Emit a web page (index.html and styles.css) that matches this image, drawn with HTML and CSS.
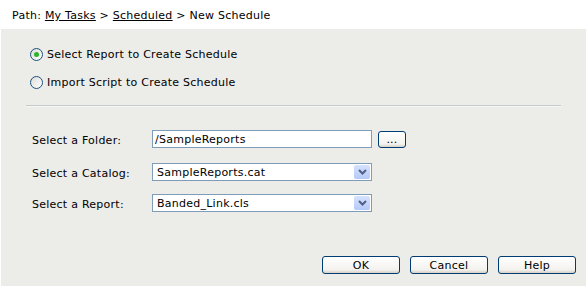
FILE: index.html
```html
<!DOCTYPE html>
<html lang="en">
  <head>
    <meta charset="UTF-8" />
    <title>New Schedule</title>
    <link rel="stylesheet" href="styles.css">
  </head>
  <body>
    <div class="path">
      Path: <a href="#" class="path-link">My Tasks</a> &gt;
      <a href="#" class="path-link">Scheduled</a> &gt; New Schedule
    </div>

    <div class="panel">
      <div class="options">
        <label class="option">
          <span class="radio radio--checked"></span>
          Select Report to Create Schedule
        </label>
        <label class="option">
          <span class="radio"></span>
          Import Script to Create Schedule
        </label>
      </div>

      <hr class="divider" />

      <div class="form">
        <span class="form-label">Select a Folder:</span>
        <div class="field">
          <div class="textbox">/SampleReports</div>
          <button class="btn btn--browse">...</button>
        </div>

        <span class="form-label">Select a Catalog:</span>
        <div class="field">
          <div class="dropdown">
            <span class="dropdown-value">SampleReports.cat</span>
            <span class="dropdown-arrow">
              <svg viewBox="0 0 9 6" class="arrow-icon">
                <path d="M1 1l3.5 3.5L8 1" fill="none" stroke="#4d6185" stroke-width="2" />
              </svg>
            </span>
          </div>
        </div>

        <span class="form-label">Select a Report:</span>
        <div class="field">
          <div class="dropdown">
            <span class="dropdown-value">Banded_Link.cls</span>
            <span class="dropdown-arrow">
              <svg viewBox="0 0 9 6" class="arrow-icon">
                <path d="M1 1l3.5 3.5L8 1" fill="none" stroke="#4d6185" stroke-width="2" />
              </svg>
            </span>
          </div>
        </div>
      </div>

      <div class="actions">
        <button class="btn btn--action">OK</button>
        <button class="btn btn--action">Cancel</button>
        <button class="btn btn--action">Help</button>
      </div>
    </div>
  </body>
</html>
```

FILE: styles.css
```css
/* XP-style schedule dialog */
* {
  margin: 0;
  padding: 0;
  box-sizing: border-box;
}

body {
  font-family: "DejaVu Sans", Verdana, sans-serif;
  font-size: 11px;
  letter-spacing: 0.25px;
  color: #000;
  background-color: #fff;
  line-height: 1;
}

/* PATH */
.path {
  height: 29px;
  padding: 10px 0 0 12px;
}
.path-link {
  color: #000;
  text-decoration: underline;
}

/* PANEL */
.panel {
  background-color: #ecece9;
  margin-left: 1px;
  height: 257px;
  padding: 19px 10px 12px 0;

  display: flex;
  flex-direction: column;
}

.options {
  display: flex;
  flex-direction: column;
  gap: 15px;
  padding-left: 29px;
}
.option {
  height: 13px;
  display: flex;
  align-items: center;
  gap: 4px;
}
.radio {
  width: 13px;
  height: 13px;
  border: 1px solid #1c5180;
  border-radius: 50%;
  background: linear-gradient(135deg, #dcdcd7, #fff);
  position: relative;
}
.radio--checked::after {
  content: "";
  position: absolute;
  left: 3px;
  top: 3px;
  width: 5px;
  height: 5px;
  border-radius: 50%;
  background-color: #2bb52b;
}

.divider {
  border: none;
  border-top: 1px solid #c5cbcb;
  border-bottom: 1px solid #f7f7f5;
  margin: 16px 0 0 25px;
  width: 535px;
}

/* FORM */
.form {
  margin-top: 23px;
  display: grid;
  grid-template-columns: 120px 1fr;
  grid-template-rows: 33px 31px 18px;
  align-items: start;
  padding-left: 31px;
}
.form-label {
  padding-top: 5px;
}
.field {
  display: flex;
  gap: 6px;
}
.textbox {
  width: 220px;
  height: 18px;
  border: 1px solid #7f9db9;
  background-color: #fff;
  padding: 3px 0 0 2px;
}
.dropdown {
  width: 220px;
  height: 18px;
  border: 1px solid #7f9db9;
  background-color: #fff;
  padding: 1px 1px 1px 4px;

  display: flex;
  align-items: center;
  justify-content: space-between;
}
.dropdown-arrow {
  width: 16px;
  height: 14px;
  border-radius: 2px;
  background: linear-gradient(#d6e2fd, #b5c9f8);

  display: flex;
  align-items: center;
  justify-content: center;
}
.arrow-icon {
  width: 9px;
  height: 6px;
}

/* BUTTONS */
.btn {
  font-family: inherit;
  font-size: 11px;
  letter-spacing: 0.25px;
  color: #000;
  border: 1px solid #003c74;
  border-radius: 3px;
  background: linear-gradient(#fff, #f3f2ee 80%, #d6d0c5);
  cursor: pointer;
}
.btn--browse {
  width: 28px;
  height: 17px;
  margin-top: 1px;
  line-height: 8px;
}
.actions {
  margin-top: auto;
  display: flex;
  justify-content: flex-end;
  gap: 10px;
}
.btn--action {
  width: 78px;
  height: 18px;
}
```
